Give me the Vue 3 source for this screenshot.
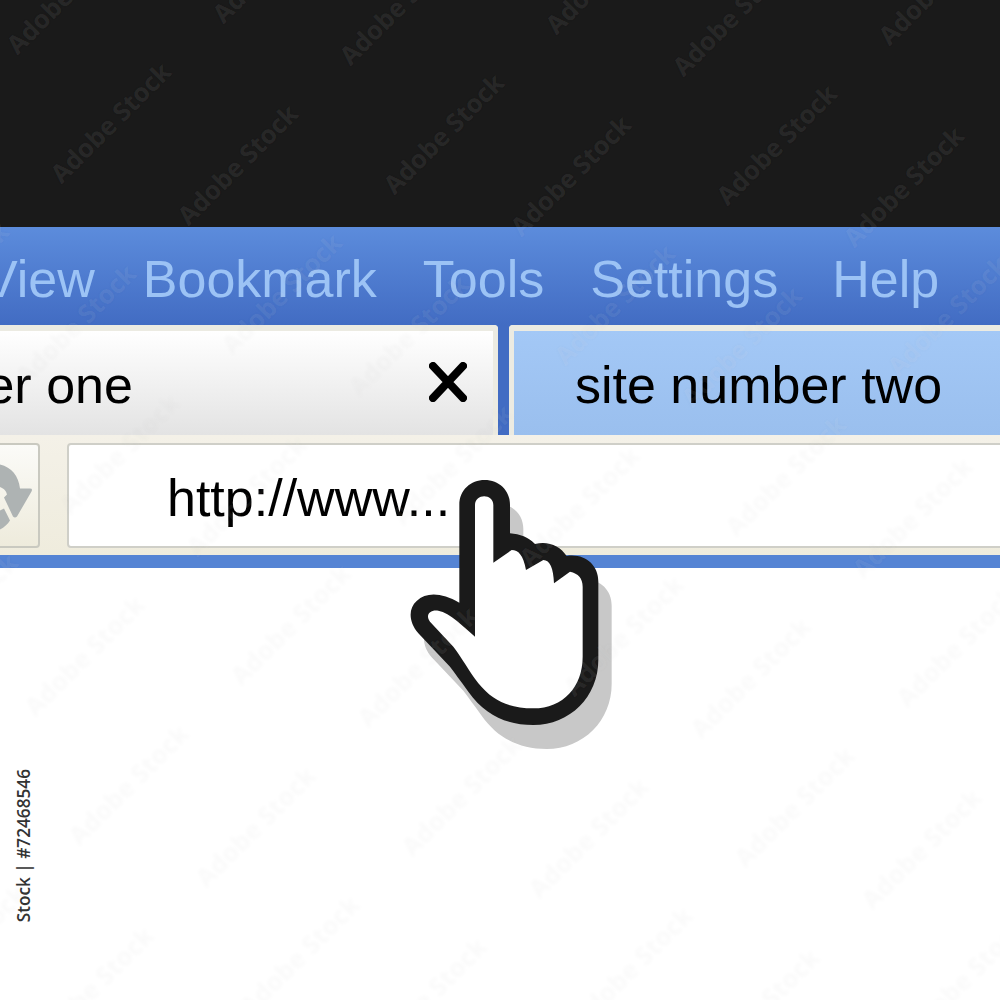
<template>
  <div class="page">
    <div class="dark"></div>

    <div class="menu">
      <span v-for="item in menu" :key="item">{{ item }}</span>
    </div>

    <div class="tabs">
      <div class="tab active">
        <span>site number one</span>
        <svg class="close" width="38" height="40" viewBox="0 0 38 40">
          <path d="M4 4 L34 36 M34 4 L4 36" stroke="#000" stroke-width="8" stroke-linecap="round" fill="none" />
        </svg>
      </div>
      <div class="tab other"><span>site number two</span></div>
    </div>

    <div class="toolbar">
      <div class="reload">
        <svg width="76" height="76" viewBox="-38 -38 76 76">
          <path d="M-10 -32.5 C8 -32.5 18 -23.5 20 -7.5 L30 -7.5 Q33 -7.5 31.5 -4.5 L17 20.5 Q15 22.5 13 20.5 L4 1.5 L7 -1.5 C6 -6.5 2 -10.5 -10 -10.5 Z" fill="#aeb3b3" />
          <path d="M-10 16.5 L0 14.5 L4 12.5 L10 24.5 C6 30.5 0 35.5 -10 35.5 Z" fill="#aeb3b3" />
        </svg>
      </div>
      <div class="address">http://www...</div>
    </div>
    <div class="strip"></div>

    <svg class="hand" width="230" height="290" viewBox="0 0 690 870">
      <path class="hand-shadow" :d="handOuter" transform="translate(40 72)" />
      <path class="hand-line" :d="handOuter" />
      <path class="hand-fill" :d="handInner" />
    </svg>

    <div class="marks">
      <span v-for="(m, i) in marks" :key="i" class="mark" :style="{ left: m.x + 'px', top: m.y + 'px' }">Adobe Stock</span>
    </div>

    <div class="stock-id">Stock | #72468546</div>
  </div>
</template>

<script setup>
const menu = ["View", "Bookmark", "Tools", "Settings", "Help"];

const handOuter =
  "M178 105 C178 60 212 30 254 30 C296 30 330 60 330 105 L330 190 C360 192 385 202 405 222 C445 212 480 228 500 258 C555 250 595 285 595 335 L595 570 C595 680 510 765 400 765 C320 765 255 735 205 665 C180 630 165 610 150 590 L55 490 C25 455 25 415 50 393 C80 365 125 368 178 398 Z";
const handInner =
  "M225 500 L225 105 C225 70 280 70 280 105 L280 278 L335 240 C355 240 370 255 378 300 L430 270 C450 270 460 295 462 340 L510 305 C535 310 548 325 548 350 L548 560 C548 650 490 715 400 715 C330 715 280 695 235 640 C205 600 190 570 160 530 L90 455 C75 435 90 418 115 422 C150 428 190 470 225 500 Z";

// watermark sits on a repeating lattice: pairs offset by (127, 42)
const marks = [];
for (let j = -1; j <= 6; j++) {
  for (let i = -2; i <= 6; i++) {
    const x = 110 + i * 333 - j * 162;
    const y = 122 + i * 11 + j * 160;
    marks.push({ x, y }, { x: x + 127, y: y + 42 });
  }
}
</script>

<style>
html,
body {
  margin: 0;
  background: #fff;
}
</style>

<style scoped>
.page {
  position: relative;
  width: 1000px;
  height: 1000px;
  overflow: hidden;
  background: #fff;
  font-family: "Liberation Sans", Arial, sans-serif;
  color: #000;
}
.dark {
  height: 227px;
  background: #1a1a1a;
}
.menu {
  box-sizing: border-box;
  height: 98px;
  padding-top: 5px;
  display: flex;
  align-items: center;
  gap: 46px;
  margin-left: -17px;
  font-size: 52px;
  color: #9cc3f5;
  background: linear-gradient(#5c8cdc, #426cc3);
  white-space: nowrap;
}
.menu span:first-child {
  margin-right: 2px;
}
.menu span:last-child {
  margin-left: 8px;
}
.tabs {
  display: flex;
  gap: 11px;
  height: 110px;
  margin-left: -306px;
  width: 1500px;
  background: #426cc3;
}
.tab {
  box-sizing: border-box;
  height: 110px;
  display: flex;
  align-items: center;
  padding-left: 61px;
  padding-top: 3px;
  font-size: 52px;
  white-space: nowrap;
  border: 5px solid #ecebe2;
  border-top-width: 6px;
  border-bottom: 0;
  border-radius: 4px 4px 0 0;
  background-clip: padding-box;
}
.active {
  width: 804px;
  justify-content: space-between;
  padding-right: 26px;
  background-image: linear-gradient(#fff, #e3e3e3);
}
.close {
  margin-top: -5px;
}
.other {
  width: 640px;
  background-image: linear-gradient(#a3c8f6, #9abfee);
}
.toolbar {
  box-sizing: border-box;
  height: 120px;
  display: flex;
  gap: 27px;
  padding: 8px 0 7px;
  margin-left: -40px;
  width: 1060px;
  background: linear-gradient(#f4f1e8, #efecdd);
}
.reload {
  box-sizing: border-box;
  width: 80px;
  flex: none;
  display: flex;
  align-items: center;
  justify-content: center;
  border: 2px solid #c9c9c0;
  border-radius: 4px;
  background: linear-gradient(#fbfbf8, #eeebdc);
}
.address {
  box-sizing: border-box;
  flex: 1;
  padding-left: 98px;
  padding-top: 5px;
  display: flex;
  align-items: center;
  font-size: 52px;
  background: #fff;
  border: 2px solid #cfcfc8;
  border-radius: 4px;
}
.strip {
  height: 13px;
  background: #5584d4;
}
.hand {
  position: absolute;
  left: 400px;
  top: 470px;
}
.hand-shadow {
  fill: #c8c8c8;
}
.hand-line {
  fill: #1a1a1a;
}
.hand-fill {
  fill: #fff;
}
.marks {
  position: absolute;
  inset: 0;
  pointer-events: none;
}
.mark {
  position: absolute;
  width: 200px;
  height: 34px;
  margin: -17px 0 0 -100px;
  text-align: center;
  line-height: 34px;
  font-family: "Open Sans", sans-serif;
  font-size: 25.5px;
  font-weight: 700;
  color: rgba(255, 255, 255, 0.08);
  text-shadow: 0 0 4px rgba(0, 0, 0, 0.025);
  transform: rotate(-45deg);
  white-space: nowrap;
}
.stock-id {
  position: absolute;
  left: 14px;
  top: 769px;
  writing-mode: vertical-rl;
  transform: rotate(180deg);
  font-family: "Open Sans", sans-serif;
  font-size: 17.2px;
  font-weight: 600;
  line-height: 20px;
  color: #333;
  white-space: nowrap;
}
</style>
